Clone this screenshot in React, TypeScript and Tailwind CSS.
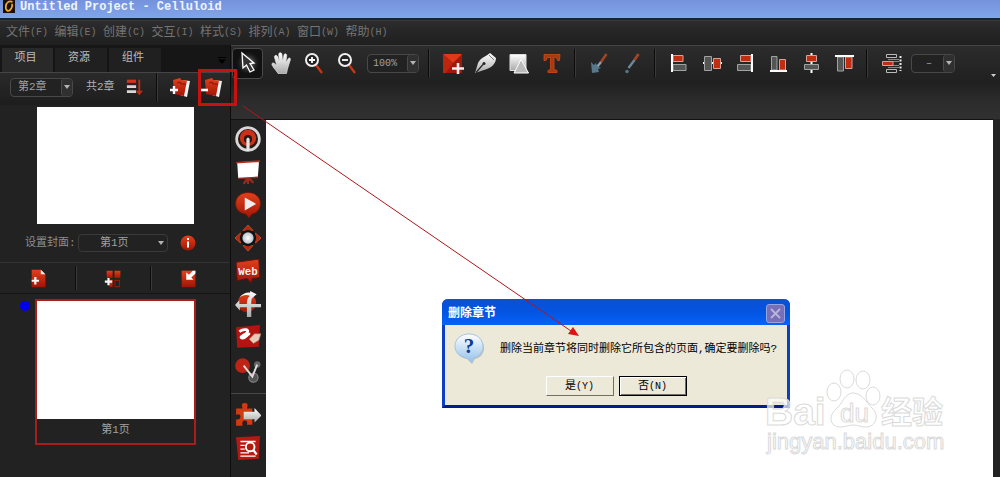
import type { ReactNode } from 'react';

const FONT = "font-['Liberation_Mono','Noto_Sans_CJK_SC',monospace]";

function Icon({ size = 24, label, children }: { size?: number; label?: string; children: ReactNode }) {
  return (
    <svg width={size} height={size} viewBox="0 0 24 24" fill="none" role="img" aria-label={label} className="shrink-0">
      {children}
    </svg>
  );
}

function Defs() {
  return (
    <svg width="0" height="0" className="absolute" aria-hidden="true">
      <defs>
        <linearGradient id="red" x1="0" y1="0" x2="0" y2="1">
          <stop offset="0" stopColor="#e2401c" />
          <stop offset="1" stopColor="#a01505" />
        </linearGradient>
        <linearGradient id="grey" x1="0" y1="0" x2="0" y2="1">
          <stop offset="0" stopColor="#ffffff" />
          <stop offset="1" stopColor="#aaaaaa" />
        </linearGradient>
        <linearGradient id="bubble" x1="0" y1="0" x2="0" y2="1">
          <stop offset="0" stopColor="#ffffff" />
          <stop offset="1" stopColor="#8fc0ea" />
        </linearGradient>
        <radialGradient id="ball">
          <stop offset="0" stopColor="#ffffff" />
          <stop offset="1" stopColor="#b9c3cc" />
        </radialGradient>
        <radialGradient id="glow">
          <stop offset="0" stopColor="#a8a8a8" />
          <stop offset="1" stopColor="#1a1a1a" stopOpacity="0" />
        </radialGradient>
      </defs>
    </svg>
  );
}

function ToolButton({ label, active = false, children }: { label: string; active?: boolean; children: ReactNode }) {
  return (
    <div className="flex w-[33px] shrink-0 justify-center">
      <button
        type="button"
        aria-label={label}
        className={
          active
            ? 'flex h-[31px] w-[31px] items-center justify-center rounded border border-[#4a4a4a] bg-[#111]'
            : 'flex h-[31px] w-[31px] items-center justify-center'
        }
      >
        <Icon label={label}>{children}</Icon>
      </button>
    </div>
  );
}

function Separator() {
  return (
    <div className="flex w-[14px] shrink-0 justify-center">
      <div className="h-7 w-[2px] border-r border-[#3a3a3a] bg-[#0c0c0c]" />
    </div>
  );
}

function Dropdown({ label, value, className, textClass }: { label: string; value: string; className: string; textClass: string }) {
  return (
    <div className={`relative flex h-[19px] shrink-0 overflow-hidden rounded-[4px] border border-[#484848] bg-[#222] ${className}`}>
      <select aria-label={label} className={`w-full appearance-none bg-transparent text-[#a0a0a0] outline-none ${textClass}`}>
        <option>{value}</option>
      </select>
      <span className="pointer-events-none absolute inset-y-0 right-0 flex w-[11px] items-center justify-center rounded-[3px] border-l border-[#4a4a4a] bg-[#303030]">
        <svg width="6" height="4" viewBox="0 0 6 4">
          <path d="M0 0H6L3 4Z" fill="#b4b4b4" />
        </svg>
      </span>
    </div>
  );
}

const menus: [string, string][] = [
  ['文件', '(F)'],
  ['编辑', '(E)'],
  ['创建', '(C)'],
  ['交互', '(I)'],
  ['样式', '(S)'],
  ['排列', '(A)'],
  ['窗口', '(W)'],
  ['帮助', '(H)'],
];

function TitleBar() {
  return (
    <header className="flex h-5 items-start gap-[5px] overflow-hidden border-b-2 border-[#17213f] bg-linear-to-b from-[#7592dd] to-[#80a5ea] pl-[3px]">
      <svg width="12" height="13" viewBox="0 0 12 13" className="shrink-0">
        <rect width="12" height="13" fill="#16110a" />
        <path d="M9.500 2C6 0 3 3 3 6C2 10 5 12 7 10C9 8 10 5 8.500 4" fill="none" stroke="#edaa2b" strokeWidth="1.800" />
      </svg>
      <h1 className="text-[12px] leading-[14px] font-bold text-[#eef4ff]">Untitled Project - Celluloid</h1>
    </header>
  );
}

function MenuBar() {
  return (
    <nav className="flex h-[25px] items-center border-t border-[#3b3b3b] bg-linear-to-b from-[#2c2c2c] to-[#1f1f1f] pl-[6px]">
      <div className="grid w-[388px] grid-cols-8">
        {menus.map(([name, key]) => (
          <button key={name} type="button" className="flex items-center text-[12px] leading-4 whitespace-nowrap text-[#747474]">
            {name}
            <span className="text-[10px]">{key}</span>
          </button>
        ))}
      </div>
    </nav>
  );
}

function Plus({ x, y }: { x: number; y: number }) {
  return <path d={`M${x - 4} ${y}H${x + 4}M${x} ${y - 4}V${y + 4}`} stroke="#f5f5f5" strokeWidth="2.400" />;
}

function ChapterPages() {
  return (
    <>
      <path d="M13 5L22 6L19 22L12 20Z" fill="#f4f4f4" />
      <path d="M5 5L12 3L13.500 5L19 5.500L16 21L6 19Z" fill="url(#red)" />
      <path d="M9 8L12 7L13 9L18 9" stroke="#7d1408" strokeWidth="1" />
    </>
  );
}

function SidePanel() {
  return (
    <aside className="flex w-[231px] shrink-0 flex-col border-r border-[#0c0c0c] bg-[#222]">
      <div className="flex h-[27px] items-end justify-between bg-[#161616] pl-[2px]">
        <div role="tablist" className="flex h-6">
          <button type="button" role="tab" aria-selected="true" className="w-[51px] bg-[#292929] pr-1 pb-1 text-[11px] text-[#bdbdbd]">
            项目
          </button>
          <button type="button" role="tab" aria-selected="false" className="w-[54px] border-l-2 border-[#141414] bg-[#202020] pr-1 pb-1 text-[11px] text-[#bdbdbd]">
            资源
          </button>
          <button type="button" role="tab" aria-selected="false" className="w-[54px] border-l-2 border-[#141414] bg-[#202020] pr-1 pb-1 text-[11px] text-[#bdbdbd]">
            组件
          </button>
        </div>
        <button type="button" aria-label="面板菜单" className="mr-1 pb-2">
          <svg width="8" height="7" viewBox="0 0 8 7">
            <path d="M0 0H8V1H0ZM0 2.500H8L4 7Z" fill="#000" />
          </svg>
        </button>
      </div>

      <div className="flex h-[33px] items-center border-t border-[#454545] bg-linear-to-b from-[#2a2a2a] to-[#1d1d1d] pb-1 pl-[10px]">
        <Dropdown label="章" value="第2章" className="w-[63px]" textClass="pl-[7px] text-[11px]" />
        <span className="ml-[13px] w-[30px] text-[11px] text-[#b0b0b0]">共2章</span>
        <button type="button" aria-label="排序" className="ml-[10px] w-6">
          <Icon size={22}>
            <path d="M1 4H11V7.500H1Z" fill="#d0341a" />
            <path d="M1 10H11V13H1ZM1 15.500H11V18.500H1Z" fill="#d8d8d8" />
            <path d="M14.500 4V17" stroke="#c02e17" strokeWidth="2" />
            <path d="M10.500 16H18.500L14.500 21Z" fill="#c02e17" />
          </Icon>
        </button>
        <Separator />
        <button type="button" aria-label="添加章节" className="ml-1 flex w-[24px] justify-center">
          <Icon>
            <ChapterPages />
            <Plus x={6} y={15} />
          </Icon>
        </button>
        <button type="button" aria-label="删除章节" className="relative ml-2 flex w-[24px] justify-center">
          <Icon>
            <ChapterPages />
            <path d="M0 15H8" stroke="#fff" strokeWidth="2.600" />
          </Icon>
          <span className="pointer-events-none absolute -top-[6px] -left-[2px] z-10 h-[37px] w-[39px] border-[3px] border-[#c8120f]" />
        </button>
      </div>

      <div className="mt-[2px] mr-[36px] ml-[37px] h-[117px] bg-white" />

      <div className="flex h-[38px] items-center pl-[25px]">
        <label htmlFor="cover" className="w-[53px] text-[11px] text-[#8d8d8d]">
          设置封面:
        </label>
        <div className="relative flex h-[18px] w-[90px] items-center rounded-[4px] border border-[#3a3a3a] bg-[#222]">
          <select id="cover" className="w-full appearance-none bg-transparent pl-[21px] text-[11px] text-[#a0a0a0] outline-none">
            <option>第1页</option>
          </select>
          <svg width="6" height="4" viewBox="0 0 6 4" className="pointer-events-none absolute right-[3px]">
            <path d="M0 0H6L3 4Z" fill="#b4b4b4" />
          </svg>
        </div>
        <button type="button" aria-label="信息" className="ml-3">
          <svg width="16" height="16" viewBox="0 0 16 16">
            <circle cx="8" cy="8" r="7.500" fill="url(#red)" />
            <path d="M7 3H9V5H7ZM7 6.500H9V12.500H7Z" fill="#fff" />
          </svg>
        </button>
      </div>

      <div className="flex h-8 items-center border-t border-b border-t-[#343434] border-b-[#151515] pr-[5px] pl-[2px]">
        <button type="button" aria-label="新建页面" className="flex flex-1 justify-center">
          <Icon size={22}>
            <path d="M4 3H14L19 8V22H4Z" fill="url(#red)" />
            <path d="M14 3V8H19Z" fill="#eee" />
            <Plus x={8} y={15} />
          </Icon>
        </button>
        <div className="h-6 w-[2px] border-r border-[#3a3a3a] bg-[#0c0c0c]" />
        <button type="button" aria-label="新建多个页面" className="flex flex-1 justify-center">
          <Icon size={22}>
            <path d="M4 4H10.500V12H4ZM12.500 4H19V12H12.500Z" fill="url(#red)" />
            <path d="M7 14H10.500V22H7Z" fill="url(#red)" />
            <path d="M13 14.500H18V21.500H13Z" stroke="#8b1d0d" strokeWidth="1.300" />
            <Plus x={6} y={16} />
          </Icon>
        </button>
        <div className="h-6 w-[2px] border-r border-[#3a3a3a] bg-[#0c0c0c]" />
        <button type="button" aria-label="导入页面" className="flex flex-1 justify-center">
          <Icon size={22}>
            <path d="M4 4H19V22H4Z" fill="url(#red)" />
            <path d="M9 6V14H17L14.500 11.500L19 7V4H16L12 8.500Z" fill="#fff" />
          </Icon>
        </button>
      </div>

      <div className="flex items-start pt-[5px] pl-[20px]">
        <span className="mt-[2px] mr-[5px] h-[10px] w-[10px] rounded-full bg-[#0000f0]" />
        <figure className="mr-[34px] flex-1 border-2 border-[#a81d1d]">
          <div className="h-[118px] bg-white" />
          <figcaption className="h-6 pt-[2px] text-center text-[11px] leading-[18px] text-[#a0a0a0]">第1页</figcaption>
        </figure>
      </div>
    </aside>
  );
}

const bar = { stroke: '#d6a39a', strokeWidth: 1, fill: '#c22d12' };
const dim = { stroke: '#a0a4a0', strokeWidth: 1, fill: '#555' };

function Toolbar() {
  return (
    <div role="toolbar" className="flex h-[37px] items-center border-t border-[#454545] bg-linear-to-b from-[#2c2c2c] to-[#202020] pb-[2px]">
      <ToolButton label="选择" active>
        <circle cx="12" cy="12" r="12" fill="url(#glow)" />
        <path d="M6 2L7 17L10.500 14L14 21L18 19L14 12.500L18 12Z" fill="#333" stroke="#fff" strokeWidth="1.300" />
      </ToolButton>
      <ToolButton label="手形">
        <path d="M9 22.500C7 19 2 14.500 3 12.500C4.500 11 6.500 13 8 15L5.500 6.500C5 4 8 3.500 8.800 6L10.500 11L9.700 3.500C9.700 1 12.800 1 13 3.500L13.600 11L15 4C15.500 2 18 2.500 17.700 5L16.800 12L19 8C20 6 22 7 21.300 9L18.500 18L17.500 22.500Z" fill="url(#grey)" stroke="#eee" strokeWidth=".6" />
      </ToolButton>
      <ToolButton label="放大">
        <path d="M14 14L20 22" stroke="#c93512" strokeWidth="2.400" />
        <circle cx="10" cy="9" r="6" fill="#222" stroke="#eee" strokeWidth="2" />
        <path d="M7 9H13M10 6V12" stroke="#fff" strokeWidth="1.800" />
      </ToolButton>
      <ToolButton label="缩小">
        <path d="M14 14L20 22" stroke="#c93512" strokeWidth="2.400" />
        <circle cx="10" cy="9" r="6" fill="#222" stroke="#eee" strokeWidth="2" />
        <path d="M7 9H13" stroke="#fff" strokeWidth="1.800" />
      </ToolButton>
      <Dropdown label="缩放" value="100%" className="mr-[3px] ml-1 w-[52px]" textClass="pl-[5px] text-[10px]" />
      <Separator />
      <ToolButton label="添加图片">
        <path d="M2 3H21V22H2Z" fill="#9f1808" />
        <path d="M2 3H21L12 12Z" fill="#df3919" />
        <path d="M2 3L12 12L5 22H2Z" fill="#bb260f" />
        <path d="M11 17.500H23M17 12V23" stroke="#eee" strokeWidth="2.600" />
      </ToolButton>
      <ToolButton label="钢笔">
        <path d="M1 22L4 12C7 6 13 5 16 2L22 7C22 11 19 16 13 18Z" fill="url(#grey)" />
        <path d="M15 4L20 9" stroke="#777" strokeWidth="1" />
        <path d="M2 21.500L9 13.500" stroke="#222" strokeWidth="1.200" />
        <circle cx="10" cy="12.500" r="1.500" fill="#222" />
      </ToolButton>
      <ToolButton label="形状">
        <path d="M3 3.500H19V19.500H3Z" fill="url(#grey)" stroke="#ddd" />
        <path d="M14 8.500L21.500 22H7Z" fill="#bbb" stroke="#fff" />
      </ToolButton>
      <ToolButton label="文本">
        <path d="M4 3.500H20L19.500 9.500H17.500L16.500 6.500H14V18.500L17 19.500V21.500H8V19.500L10.500 18.500V6.500H7.500L6 9.500H4Z" fill="#a8380f" stroke="#cf4d1c" strokeWidth=".8" />
      </ToolButton>
      <Separator />
      <ToolButton label="样式刷">
        <path d="M14 11L19.500 3" stroke="#a64322" strokeWidth="2.600" />
        <path d="M14 11L10 16" stroke="#8ba0aa" strokeWidth="2.400" />
        <path d="M4 11L7 14L9 12L10 15L14 17L11 18L12 21L5 22Z" fill="#57788a" />
      </ToolButton>
      <ToolButton label="画笔">
        <path d="M14.500 9L18.500 3" stroke="#a64322" strokeWidth="2.800" />
        <path d="M8.500 17L14.500 9" stroke="#6d8a98" strokeWidth="2.400" />
        <circle cx="7" cy="20.500" r="1.700" fill="#57788a" />
      </ToolButton>
      <Separator />
      <ToolButton label="左对齐">
        <path d="M6 4.500H16V10.500H6Z" {...bar} />
        <path d="M6 13.500H19V19.500H6Z" {...dim} />
        <path d="M5 3V21" stroke="#fff" strokeWidth="2" />
      </ToolButton>
      <ToolButton label="水平居中">
        <path d="M3 12H22" stroke="#fff" strokeWidth="2" />
        <path d="M4.500 5.500H11.500V19.500H4.500Z" {...dim} />
        <path d="M13.500 7.500H20.500V17.500H13.500Z" {...bar} />
      </ToolButton>
      <ToolButton label="右对齐">
        <path d="M7.500 4.500H18V10.500H7.500Z" {...bar} />
        <path d="M4.500 13.500H18V19.500H4.500Z" {...dim} />
        <path d="M19 3V21" stroke="#fff" strokeWidth="2" />
      </ToolButton>
      <ToolButton label="底对齐">
        <path d="M5.500 5.500H11V19H5.500Z" {...dim} />
        <path d="M13.500 8.500H19.500V19H13.500Z" {...bar} />
        <path d="M4 20H21" stroke="#fff" strokeWidth="2" />
      </ToolButton>
      <ToolButton label="垂直居中">
        <path d="M12.500 2V22" stroke="#fff" strokeWidth="2" />
        <path d="M7.500 4.500H17.500V10.500H7.500Z" {...bar} />
        <path d="M5.500 13.500H19.500V18.500H5.500Z" {...dim} />
      </ToolButton>
      <ToolButton label="顶对齐">
        <path d="M5.500 6H11.500V20H5.500Z" {...dim} />
        <path d="M13.500 6H20V17.500H13.500Z" {...bar} />
        <path d="M3 5H22" stroke="#fff" strokeWidth="2" />
      </ToolButton>
      <Separator />
      <ToolButton label="分布">
        <path d="M7.500 3.500H17.500V6.500H7.500ZM7.500 18.500H17.500V21.500H7.500Z" fill="#222" stroke="#bbb" />
        <path d="M3.500 10.500H14V14.500H3.500Z" {...bar} />
        <path d="M14 10.500H20M14 14.500H20M9 8.500H20M9 16.500H20" stroke="#888" />
        <path d="M21.500 5V20" stroke="#eee" strokeWidth="2" strokeDasharray="2 1.500" />
      </ToolButton>
      <Dropdown label="间距" value="–" className="ml-1 w-[44px]" textClass="pl-[14px] text-[10px]" />
      <button type="button" aria-label="更多" className="mr-[4px] ml-auto self-end pb-[3px]">
        <svg width="5" height="3" viewBox="0 0 5 3">
          <path d="M0 0H5L2.500 3Z" fill="#ccc" />
        </svg>
      </button>
    </div>
  );
}

const widgets: { label: string; art: ReactNode }[] = [
  {
    label: '按钮',
    art: (
      <>
        <circle cx="12" cy="12" r="10.500" fill="#2a1a17" stroke="#d7d7d7" strokeWidth="2.500" />
        <circle cx="12" cy="11" r="7.500" fill="#c83317" />
        <circle cx="12" cy="12" r="3.800" fill="#2b1713" />
        <path d="M10.500 12Q12 9 13.500 12V23H10.500Z" fill="#e5e5e5" />
      </>
    ),
  },
  {
    label: '演示',
    art: (
      <>
        <path d="M8 23L12 17L17 22M12 17V23" stroke="#9e2a1e" strokeWidth="2" />
        <path d="M2 3L22 2V5L21 17L3 18Z" fill="#fff" />
        <path d="M1 3.500L23 2" stroke="#b8301d" strokeWidth="1.500" />
        <path d="M3 18L21 17" stroke="#8f2a20" strokeWidth="1.500" />
      </>
    ),
  },
  {
    label: '视频',
    art: (
      <>
        <path d="M12 .5C19 .5 23.500 5 23.500 10.500C23.500 16 20 19.500 15.500 20.500L13 24L10 20.500C4 19.500 .5 16 .5 10.500C.5 5 5 .5 12 .5Z" fill="url(#red)" stroke="#6e1509" strokeWidth=".8" />
        <path d="M9 5L19.500 11L9 17Z" fill="#eee" />
      </>
    ),
  },
  {
    label: '导航',
    art: (
      <>
        <path d="M7.500 5L12 0L16.500 5ZM7.500 19L12 24L16.500 19ZM5 7.500L0 12L5 16.500ZM19 7.500L24 12L19 16.500Z" fill="#a92c12" stroke="#dd4e23" strokeWidth=".8" />
        <circle cx="12" cy="12" r="7.500" fill="#111" />
        <circle cx="12" cy="12" r="5.200" fill="url(#ball)" />
      </>
    ),
  },
  {
    label: '网页',
    art: (
      <>
        <path d="M1 4L22 1L23 18L16 19L15 23L11 19L2 21Z" fill="url(#red)" stroke="#641309" />
        <text x="12" y="15.500" textAnchor="middle" fontSize="10" fontWeight="bold" fontFamily="Liberation Mono, monospace" fill="#eee">
          Web
        </text>
      </>
    ),
  },
  {
    label: '旋转',
    art: (
      <>
        <circle cx="11" cy="11" r="8.500" fill="url(#red)" />
        <path d="M11 24V15H4.500V18L0 13L4 8.500V12H11C11 8 12 5 14 4.500C10 3 7 4 4 6C7 2 11 1 14 1.500V0L20 3L15.500 7C15 9 15 10 15 12H24V15H15V24Z" fill="url(#grey)" />
      </>
    ),
  },
  {
    label: '擦除',
    art: (
      <>
        <path d="M1 3L23 1L22 21L2 22Z" fill="#b51310" />
        <path d="M4 7C8 4 14 5 11 8C8 11 3 12 7 13C11 13 11 9 14 9" stroke="#fff" strokeWidth="2.500" />
        <path d="M13 14L18 9H24L22 15L17 18Z" fill="#e9c9b8" stroke="#9d6858" strokeWidth=".6" />
      </>
    ),
  },
  {
    label: '连线',
    art: (
      <>
        <circle cx="7" cy="8" r="6.800" fill="#bd2415" />
        <circle cx="20.500" cy="7" r="3" fill="#666" />
        <circle cx="17" cy="19" r="4.300" fill="#555" stroke="#888" />
        <path d="M8 8L16 18L20.500 7" stroke="#ddd" strokeWidth="1.800" />
      </>
    ),
  },
  {
    label: '插件',
    art: (
      <>
        <path d="M1 6H7Q5 1 9 1Q13 1 11 6H16V21H11Q12 17 9 17Q6 17 7 22H1V16Q5 17 5 13Q4 10 1 12Z" fill="#d13a10" />
        <path d="M8 9H18V5.500L24.500 12.500L18 19V16H8Z" fill="url(#grey)" />
      </>
    ),
  },
  {
    label: '搜索',
    art: (
      <>
        <path d="M1 2L23 1L22 22L3 23Z" fill="#b51914" />
        <path d="M5 6H19M5 9.500H9M5 13H9M5 16.500H13M5 19.500H19" stroke="#fff" strokeWidth="1.200" />
        <circle cx="14" cy="11" r="4" fill="#b51914" stroke="#fff" strokeWidth="1.800" />
        <path d="M17 14L20 18" stroke="#fff" strokeWidth="2" />
      </>
    ),
  },
];

function WidgetRail() {
  return (
    <div className="flex w-[35px] shrink-0 flex-col items-center border-t border-[#111] bg-[#222] pt-[2px]">
      {widgets.slice(0, 8).map((w) => (
        <button key={w.label} type="button" aria-label={w.label} className="mr-px flex h-[33px] items-center">
          <Icon size={26}>{w.art}</Icon>
        </button>
      ))}
      <div className="mt-[7px] mb-1 h-px w-full bg-[#484848]" />
      {widgets.slice(8).map((w) => (
        <button key={w.label} type="button" aria-label={w.label} className="mr-px flex h-[33px] items-center">
          <Icon size={26}>{w.art}</Icon>
        </button>
      ))}
    </div>
  );
}

function ConfirmDialog() {
  return (
    <div role="dialog" aria-labelledby="dialog-title" className="absolute top-[299px] left-[442px] flex h-[109px] w-[348px] flex-col rounded-t-[6px] border-x-[3px] border-b-[3px] border-x-[#0b3fc4] border-b-[#061c86] bg-[#ece9d8]">
      <div className="-mx-[3px] flex h-[26px] shrink-0 items-center justify-between rounded-t-[6px] bg-linear-to-b from-[#0a50d2] via-[#0454e2] to-[#0463f8] pt-[2px] pr-[5px] pl-[6px]">
        <h2 id="dialog-title" className="pt-px text-[12px] leading-4 font-bold text-white">
          删除章节
        </h2>
        <button type="button" aria-label="关闭" className="h-[19px] w-[19px] rounded-[3px] border border-[#97a3dc] bg-[#7770b8]">
          <svg width="17" height="17" viewBox="0 0 17 17">
            <path d="M4 4L13 13M13 4L4 13" stroke="#b9b5d9" strokeWidth="1.800" />
          </svg>
        </button>
      </div>
      <div className="flex items-center pt-2 pl-[9px]">
        <svg width="32" height="32" viewBox="0 0 32 32" className="shrink-0">
          <path d="M17 3C25 3 30 8 30 15C30 21 26 25 21 26L18 31L13 26C6 25 2 20 2 14C2 8 8 3 17 3Z" fill="#8a99ac" opacity=".5" />
          <path d="M15 1C24 1 29 7 29 14C29 19 25 24 19 25L18 30L13 25C6 24 1 20 1 13C1 6 7 1 15 1Z" fill="url(#bubble)" stroke="#a9c3dd" />
          <text x="15" y="20" textAnchor="middle" fontFamily="Liberation Serif, serif" fontWeight="bold" fontSize="21" fill="#123a91">
            ?
          </text>
        </svg>
        <p className="ml-[14px] text-[11px] leading-4 whitespace-nowrap text-black">删除当前章节将同时删除它所包含的页面,确定要删除吗?</p>
      </div>
      <div className="mt-[11px] flex justify-center gap-[5px]">
        <button type="button" className="flex h-5 w-[68px] items-center justify-center border border-t-white border-r-[#716f64] border-b-[#716f64] border-l-white text-[11px] text-black">
          是<span className="text-[10px]">(Y)</span>
        </button>
        <button type="button" className="flex h-5 w-[68px] items-center justify-center border border-black text-[11px] text-black shadow-[inset_1px_1px_0_#fff,inset_-1px_-1px_0_#716f64]">
          否<span className="text-[10px]">(N)</span>
        </button>
      </div>
    </div>
  );
}

function Watermark() {
  return (
    <svg width="190" height="94" viewBox="0 0 190 94" className="pointer-events-none absolute top-[366px] left-[762px]" fontFamily="Liberation Sans, Noto Sans CJK SC, sans-serif">
      <g fill="#fff" fillOpacity=".7" stroke="#dadada" strokeWidth="1">
        <ellipse cx="72" cy="26" rx="7" ry="9" />
        <ellipse cx="85" cy="13" rx="7" ry="9" />
        <ellipse cx="101" cy="14" rx="7" ry="9" />
        <ellipse cx="111" cy="30" rx="7" ry="9" />
        <path d="M91 27C100 27 104 36 110 42C118 49 114 61 104 61C98 61 96 59 91 59C86 59 84 61 78 61C68 61 66 50 74 43C81 37 83 27 91 27Z" />
        <text x="3" y="59" fontSize="39" fontWeight="bold">Bai</text>
        <text x="78" y="56" fontSize="26">du</text>
        <text x="119" y="57" fontSize="31" fontWeight="bold">经验</text>
        <text x="5" y="83" fontSize="22">jingyan.baidu.com</text>
      </g>
    </svg>
  );
}

export default function App() {
  return (
    <div className={`relative flex min-h-screen flex-col overflow-hidden bg-[#222] ${FONT}`}>
      <Defs />
      <TitleBar />
      <MenuBar />
      <div className="flex flex-1">
        <SidePanel />
        <main className="flex min-w-0 flex-1 flex-col">
          <Toolbar />
          <div className="h-[37px] bg-linear-to-b from-[#1f1f1f] via-[#2c2c2c] to-[#303030]" />
          <div className="flex flex-1">
            <WidgetRail />
            <div className="mr-[7px] flex-1 border-t border-[#111] bg-white" />
          </div>
        </main>
      </div>
      <ConfirmDialog />
      <svg width="340" height="236" viewBox="0 0 340 236" className="pointer-events-none absolute top-[102px] left-[240px]" aria-hidden="true">
        <path d="M3 4L331 229" stroke="#b0181b" strokeWidth="1" />
        <path d="M339 234L328 232L333 225Z" fill="#dc1414" />
      </svg>
      <Watermark />
    </div>
  );
}
